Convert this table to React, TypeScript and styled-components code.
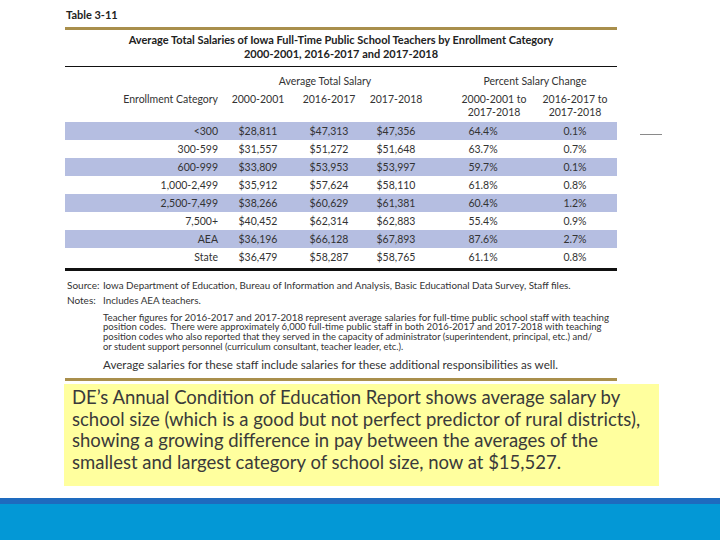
import React from "react";
import styled, { createGlobalStyle } from "styled-components";

const Global = createGlobalStyle`
  html, body { margin: 0; padding: 0; background: #ffffff; }
  body { font-family: Lato, "Open Sans", sans-serif; }
`;

const Page = styled.div`
  position: relative;
  width: 720px;
  height: 540px;
  display: flex;
  flex-direction: column;
  overflow: hidden;
  background: #fff;
`;

const TableArea = styled.div`
  margin-left: 65px;
  width: 552px;
  display: flex;
  flex-direction: column;
  color: #333;
`;

const TableLabel = styled.div`
  margin-top: 8px;
  height: 14px;
  line-height: 14px;
  font-size: 11px;
  font-weight: 700;
  color: #222;
  padding-left: 1px;
`;

const GoldRule = styled.div<{ $top: number }>`
  margin-top: ${(p) => p.$top}px;
  height: 3px;
  background: #a98f4c;
`;

const Title = styled.div`
  margin-top: 3px;
  text-align: center;
  font-size: 11px;
  font-weight: 700;
  line-height: 14px;
  color: #222;
`;

const BlackRule = styled.div<{ $top: number; $h: number }>`
  margin-top: ${(p) => p.$top}px;
  height: ${(p) => p.$h}px;
  background: #111;
`;

const cols = "157px 72px 70px 64px 112px 70px 1fr";

const HeadGrid = styled.div`
  margin-top: 7px;
  margin-bottom: 3px;
  display: grid;
  grid-template-columns: ${cols};
  grid-template-rows: 14px 26px;
  row-gap: 5px;
  font-size: 10.5px;
  line-height: 13px;
`;

const HeadCell = styled.div<{ $col: string; $align?: string; $pl?: number; $pr?: number; $row: number }>`
  grid-column: ${(p) => p.$col};
  grid-row: ${(p) => p.$row};
  text-align: ${(p) => p.$align || "center"};
  padding-left: ${(p) => p.$pl || 0}px;
  padding-right: ${(p) => p.$pr || 0}px;
  line-height: ${(p) => (p.$row === 1 ? 14 : 13)}px;
  white-space: nowrap;
`;

const Row = styled.div<{ $shaded: boolean }>`
  display: grid;
  grid-template-columns: ${cols};
  height: 18px;
  align-items: center;
  font-size: 10.5px;
  background: ${(p) => (p.$shaded ? "#b5bee1" : "transparent")};
`;

const Cell = styled.div<{ $align?: string; $pl?: number; $pr?: number }>`
  text-align: ${(p) => p.$align || "center"};
  padding-left: ${(p) => p.$pl || 0}px;
  padding-right: ${(p) => p.$pr || 0}px;
  white-space: nowrap;
`;

const Notes = styled.div`
  margin-top: 8px;
  display: grid;
  grid-template-columns: 36px 1fr;
  color: #333;
  padding-left: 2px;
`;

const NoteLabel = styled.div<{ $top: number }>`
  margin-top: ${(p) => p.$top}px;
  line-height: 12px;
  font-size: 10px;
`;

const NoteText = styled.div<{ $top: number; $lh: number; $size: number }>`
  margin-top: ${(p) => p.$top}px;
  line-height: ${(p) => p.$lh}px;
  font-size: ${(p) => p.$size}px;
  white-space: nowrap;
`;

const NoteLine = styled.div<{ $size: number }>`
  height: 10px;
  line-height: 10px;
  font-size: ${(p) => p.$size}px;
`;

const Callout = styled.div`
  margin-top: 3px;
  margin-left: 64px;
  width: 595px;
  height: 102px;
  box-sizing: border-box;
  padding: 3px 0 0 8px;
  background: #ffff9e;
  font-size: 18.5px;
  line-height: 21.5px;
  color: #3a3a3a;
  white-space: nowrap;
`;

const Footer = styled.div`
  margin-top: auto;
  height: 36px;
  border-top: 6px solid #1e6bbf;
  background: #0398d6;
`;

const SideTick = styled.div`
  position: absolute;
  left: 640px;
  top: 134px;
  width: 22px;
  height: 1px;
  background: #8a8a8a;
`;

const rows = [
  ["<300", "$28,811", "$47,313", "$47,356", "64.4%", "0.1%"],
  ["300-599", "$31,557", "$51,272", "$51,648", "63.7%", "0.7%"],
  ["600-999", "$33,809", "$53,953", "$53,997", "59.7%", "0.1%"],
  ["1,000-2,499", "$35,912", "$57,624", "$58,110", "61.8%", "0.8%"],
  ["2,500-7,499", "$38,266", "$60,629", "$61,381", "60.4%", "1.2%"],
  ["7,500+", "$40,452", "$62,314", "$62,883", "55.4%", "0.9%"],
  ["AEA", "$36,196", "$66,128", "$67,893", "87.6%", "2.7%"],
  ["State", "$36,479", "$58,287", "$58,765", "61.1%", "0.8%"],
];

export default function App() {
  return (
    <Page>
      <Global />
      <TableArea>
        <TableLabel>Table 3-11</TableLabel>
        <GoldRule $top={5} />
        <Title>
          Average Total Salaries of Iowa Full-Time Public School Teachers by Enrollment Category
          <br />
          2000-2001, 2016-2017 and 2017-2018
        </Title>
        <BlackRule $top={5} $h={1} />
        <HeadGrid>
          <HeadCell $row={1} $col="2 / 5">Average Total Salary</HeadCell>
          <HeadCell $row={1} $col="5 / 7" $pl={32}>Percent Salary Change</HeadCell>
          <HeadCell $row={2} $col="1" $align="right" $pr={4}>Enrollment Category</HeadCell>
          <HeadCell $row={2} $col="2">2000-2001</HeadCell>
          <HeadCell $row={2} $col="3">2016-2017</HeadCell>
          <HeadCell $row={2} $col="4">2017-2018</HeadCell>
          <HeadCell $row={2} $col="5" $pl={20}>
            2000-2001 to
            <br />
            2017-2018
          </HeadCell>
          <HeadCell $row={2} $col="6">
            2016-2017 to
            <br />
            2017-2018
          </HeadCell>
        </HeadGrid>
        {rows.map((r, i) => (
          <Row key={r[0]} $shaded={i % 2 === 0}>
            <Cell $align="right" $pr={4}>{r[0]}</Cell>
            <Cell>{r[1]}</Cell>
            <Cell>{r[2]}</Cell>
            <Cell>{r[3]}</Cell>
            <Cell $pl={20} $pr={22}>{r[4]}</Cell>
            <Cell>{r[5]}</Cell>
          </Row>
        ))}
        <BlackRule $top={2} $h={3} />
        <Notes>
          <NoteLabel $top={0}>Source:</NoteLabel>
          <NoteText $top={0} $lh={12} $size={9.8}>
            Iowa Department of Education, Bureau of Information and Analysis, Basic Educational Data Survey, Staff files.
          </NoteText>
          <NoteLabel $top={3}>Notes:</NoteLabel>
          <NoteText $top={3} $lh={12} $size={9.8}>Includes AEA teachers.</NoteText>
          <div />
          <NoteText $top={6} $lh={10} $size={10}>
            <NoteLine $size={9.75}>
              Teacher figures for 2016-2017 and 2017-2018 represent average salaries for full-time public school staff with teaching
            </NoteLine>
            <NoteLine $size={9.55}>
              position codes.&nbsp; There were approximately 6,000 full-time public staff in both 2016-2017 and 2017-2018 with teaching
            </NoteLine>
            <NoteLine $size={9.45}>
              position codes who also reported that they served in the capacity of administrator (superintendent, principal, etc.) and/
            </NoteLine>
            <NoteLine $size={9.4}>
              or student support personnel (curriculum consultant, teacher leader, etc.).
            </NoteLine>
          </NoteText>
          <div />
          <NoteText $top={7} $lh={12} $size={11.6}>
            Average salaries for these staff include salaries for these additional responsibilities as well.
          </NoteText>
        </Notes>
        <GoldRule $top={7} />
      </TableArea>
      <Callout>
        DE’s Annual Condition of Education Report shows average salary by
        <br />
        school size (which is a good but not perfect predictor of rural districts),
        <br />
        showing a growing difference in pay between the averages of the
        <br />
        smallest and largest category of school size, now at $15,527.
      </Callout>
      <Footer />
      <SideTick />
    </Page>
  );
}
